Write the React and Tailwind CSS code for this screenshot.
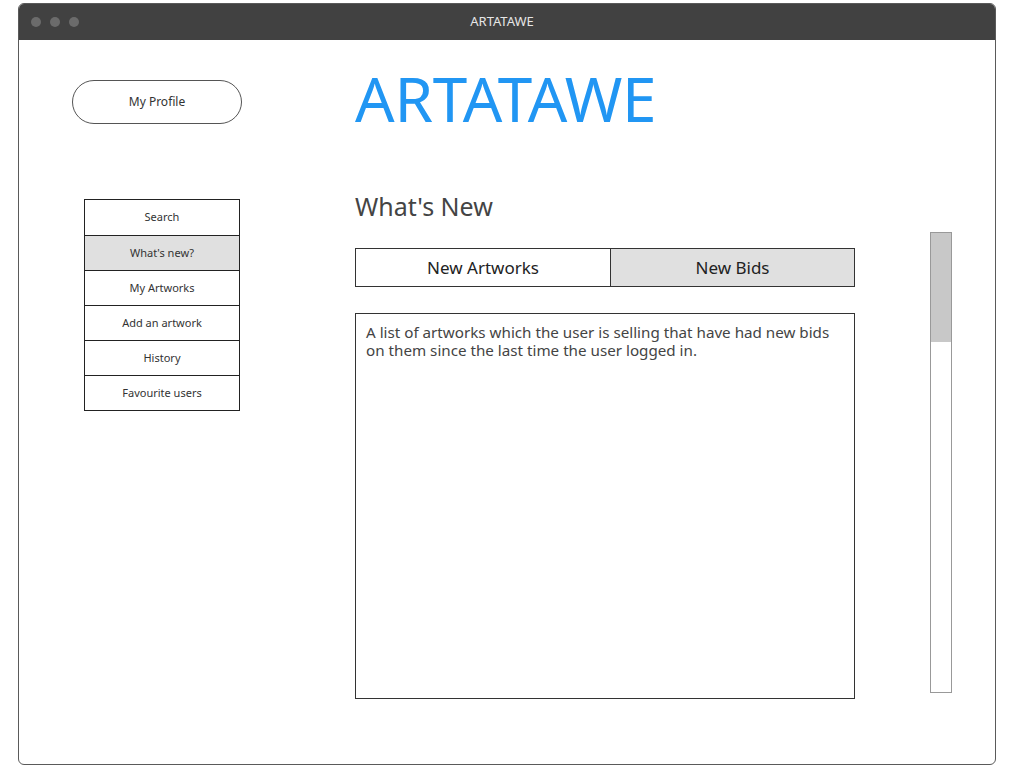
const navItems = ['Search', "What's new?", 'My Artworks', 'Add an artwork', 'History', 'Favourite users']

export default function App() {
  return (
    <div className="w-[1013px] h-[783px] bg-white pt-[3px] pl-[18px] font-['Noto_Sans',sans-serif]">
      <div className="w-[978px] h-[762px] border border-[#5a5a5a] rounded-[6px] overflow-hidden flex flex-col">
        {/* title bar */}
        <div className="h-[36px] bg-[#414141] flex items-center relative shrink-0">
          <div className="flex gap-[9px] pl-[12px]">
            <span className="w-[10px] h-[10px] rounded-full bg-[#6b6b6b]" />
            <span className="w-[10px] h-[10px] rounded-full bg-[#6b6b6b]" />
            <span className="w-[10px] h-[10px] rounded-full bg-[#6b6b6b]" />
          </div>
          <span className="absolute left-0 right-[10px] text-center text-[13px] text-[#e6e6e6]">ARTATAWE</span>
        </div>

        <div className="flex flex-1">
          {/* sidebar */}
          <div className="w-[336px] shrink-0 pl-[53px] pt-[40px]">
            <button className="w-[170px] h-[44px] rounded-full border border-[#555] text-[12px] text-[#333]">
              My Profile
            </button>
            <div className="mt-[75px] ml-[12px] w-[156px] border border-[#222]">
              {navItems.map((item, i) => (
                <div
                  key={item}
                  className={`h-[35px] flex items-center justify-center text-[11px] text-[#333] ${i > 0 ? 'border-t border-[#222]' : ''} ${i === 1 ? 'bg-[#e0e0e0]' : 'bg-white'}`}
                >
                  {item}
                </div>
              ))}
            </div>
          </div>

          {/* main */}
          <div className="w-[500px] shrink-0 pt-[22px]">
            <h1 className="text-[62px] leading-[72px] text-[#2196f3] tracking-[-0.2px]">ARTATAWE</h1>
            <h2 className="mt-[57px] text-[25px] leading-[30px] text-[#444]">What's New</h2>
            <div className="mt-[27px] flex h-[39px] border border-[#333]">
              <div className="w-[255px] flex items-center justify-center text-[17px] text-[#222] border-r border-[#333]">New Artworks</div>
              <div className="flex-1 flex items-center justify-center text-[17px] text-[#222] bg-[#e0e0e0]">New Bids</div>
            </div>
            <div className="mt-[26px] h-[386px] border border-[#333] px-[10px] py-[9px] text-[15.2px] leading-[18px] text-[#444]">
              A list of artworks which the user is selling that have had new bids on them since the last time the user logged in.
            </div>
          </div>

          {/* scrollbar */}
          <div className="pl-[75px] pt-[192px]">
            <div className="w-[22px] h-[461px] border border-[#999] bg-white">
              <div className="h-[109px] bg-[#c8c8c8]" />
            </div>
          </div>
        </div>
      </div>
    </div>
  )
}
